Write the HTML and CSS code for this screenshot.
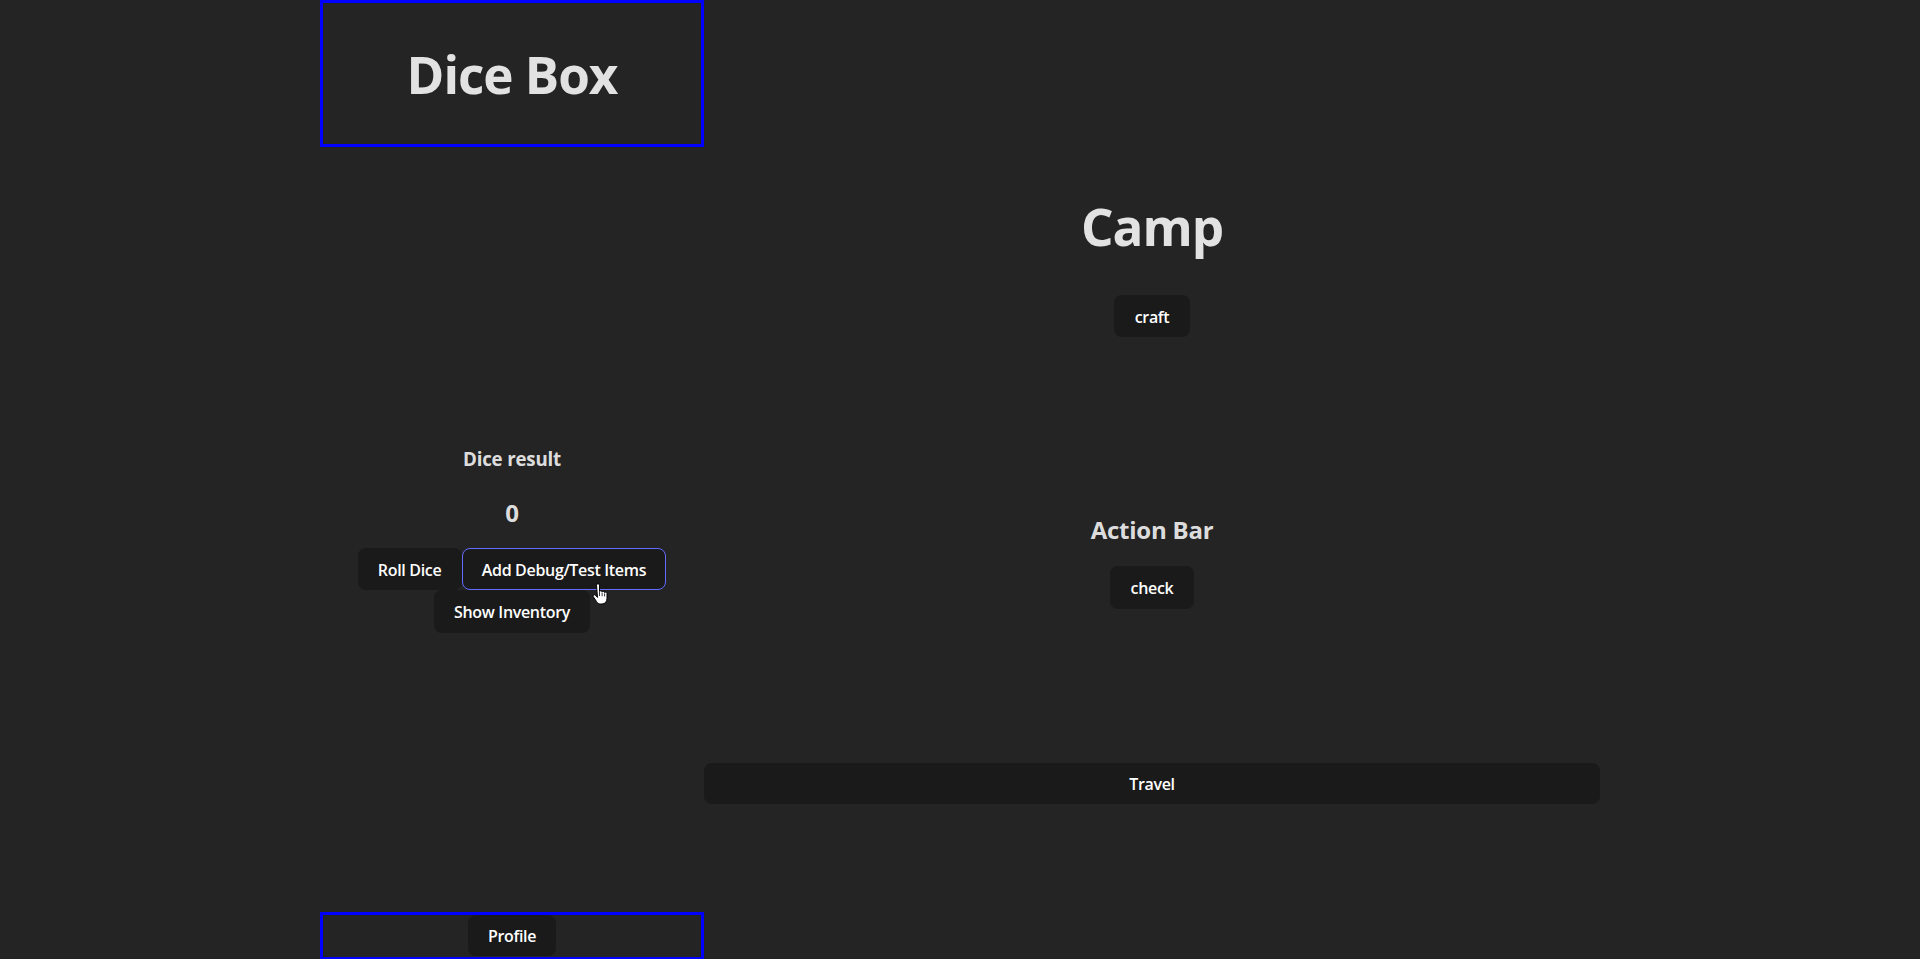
FILE: index.html
```html
<!DOCTYPE html>
<html lang="en">
<head>
<meta charset="UTF-8">
<title>Dice Box</title>
<link rel="stylesheet" href="styles.css">
</head>
<body>
<div class="app">
  <aside class="sidebar">
    <header class="dice-box">
      <h1 class="title">Dice Box</h1>
    </header>
    <section class="dice-panel">
      <h3 class="dice-label">Dice result</h3>
      <div class="dice-value">0</div>
      <div class="dice-actions">
        <button class="btn">Roll Dice</button><button class="btn btn-hover">Add Debug/Test Items</button><button class="btn">Show Inventory</button>
        <svg class="cursor" width="17" height="22" viewBox="0 0 17 22" aria-hidden="true">
          <path d="M5.5 2.2a1.5 1.5 0 0 1 3 0v6.3a1.4 1.4 0 0 1 2.6 0.4a1.4 1.4 0 0 1 2.5 0.6a1.4 1.4 0 0 1 2.4 1v4.8c0 3.3-2 5.7-5 5.7h-1.6c-1.8 0-2.9-0.9-3.8-2.3l-3.3-5a1.3 1.3 0 0 1 2-1.6l2.2 2.3z" fill="#fff" stroke="#000" stroke-width="1" stroke-linejoin="round"/>
          <path d="M8.5 9v4M11.1 9.6v3.6M13.6 10.4v3" stroke="#000" stroke-width="0.8"/>
        </svg>
      </div>
    </section>
    <footer class="profile-box">
      <button class="btn">Profile</button>
    </footer>
  </aside>
  <main class="main">
    <h1 class="title camp-title">Camp</h1>
    <button class="btn craft-btn">craft</button>
    <h2 class="action-title">Action Bar</h2>
    <button class="btn check-btn">check</button>
    <button class="btn travel-btn">Travel</button>
  </main>
</div>
</body>
</html>
```
FILE: styles.css
```css
html, body {
  margin: 0;
  padding: 0;
}

body {
  background-color: #242424;
  color: rgba(255, 255, 255, 0.87);
  font-family: "Open Sans", "Noto Sans", sans-serif;
  height: 959px;
  overflow: hidden;
}

.app {
  width: 1280px;
  margin: 0 auto;
  display: flex;
  height: 959px;
}

.sidebar {
  width: 384px;
  display: flex;
  flex-direction: column;
  align-items: stretch;
}

.dice-box {
  border: 3px solid #0000ff;
  height: 141px;
  display: flex;
  align-items: flex-start;
  justify-content: center;
}

.title {
  margin: 0;
  font-size: 51.2px;
  line-height: 56px;
  font-weight: 700;
  letter-spacing: -0.02em;
}

.dice-box .title {
  margin-top: 43px;
}

.dice-panel {
  margin-top: 301px;
  display: flex;
  flex-direction: column;
  align-items: center;
}

.dice-label {
  margin: 0;
  font-size: 18.72px;
  line-height: 22px;
  font-weight: 700;
  letter-spacing: -0.01em;
}

.dice-value {
  margin-top: 29px;
  font-size: 24px;
  line-height: 28px;
  font-weight: 700;
}

.dice-actions {
  position: relative;
  margin-top: 21px;
  width: 340px;
  display: flex;
  flex-wrap: wrap;
  justify-content: center;
}

.btn {
  font-family: "Open Sans", "Noto Sans", sans-serif;
  font-size: 16px;
  font-weight: 600;
  line-height: 21.3px;
  letter-spacing: -0.02em;
  color: #ffffff;
  background-color: #1a1a1a;
  border: 1px solid transparent;
  border-radius: 8px;
  padding: 11px 19.2px 8.2px;
  cursor: pointer;
}

.btn-hover {
  border-color: #646cff;
}

.cursor {
  position: absolute;
  left: 249px;
  top: 35px;
}

.profile-box {
  margin-top: auto;
  border: 3px solid #0000ff;
  border-bottom-width: 2px;
  height: 42px;
  display: flex;
  justify-content: center;
  align-items: flex-start;
}

.profile-box .btn {
  padding-top: 10px;
  padding-bottom: 8px;
}

.main {
  width: 896px;
  display: flex;
  flex-direction: column;
  align-items: center;
}

.camp-title {
  margin-top: 198px;
}

.craft-btn {
  margin-top: 41px;
}

.action-title {
  margin: 179px 0 0;
  font-size: 24px;
  line-height: 28px;
  font-weight: 700;
  letter-spacing: -0.01em;
}

.check-btn {
  margin-top: 22px;
}

.travel-btn {
  margin-top: 154px;
  align-self: stretch;
  padding-top: 10.5px;
  padding-bottom: 7.5px;
}
```
